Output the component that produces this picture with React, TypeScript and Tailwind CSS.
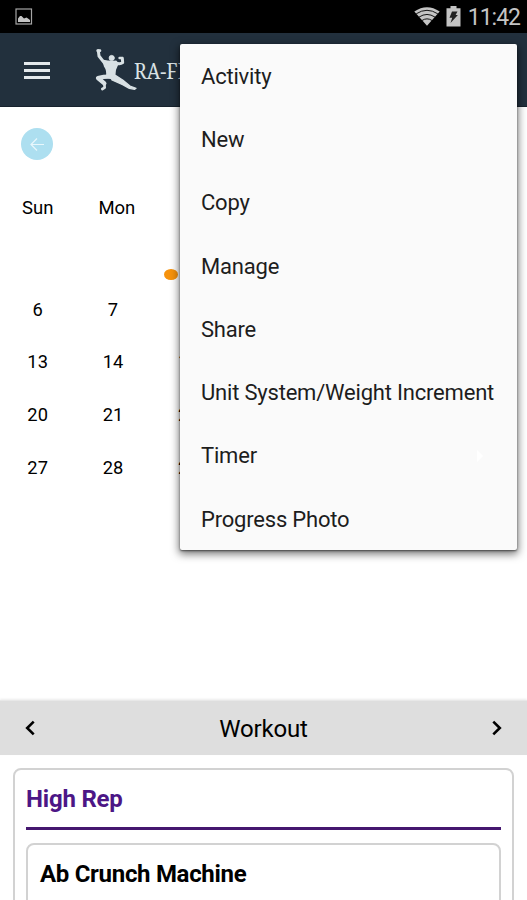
import { useState } from "react";

const menuItems = [
  { label: "Activity" },
  { label: "New" },
  { label: "Copy" },
  { label: "Manage" },
  { label: "Share" },
  { label: "Unit System/Weight Increment" },
  { label: "Timer", submenu: true },
  { label: "Progress Photo" },
];

const weekdays = ["Sun", "Mon", "Tue", "Wed", "Thu", "Fri", "Sat"];

const weeks = [
  ["", "", "1", "2", "3", "4", "5"],
  ["6", "7", "8", "9", "10", "11", "12"],
  ["13", "14", "15", "16", "17", "18", "19"],
  ["20", "21", "22", "23", "24", "25", "26"],
  ["27", "28", "29", "30", "", "", ""],
];

function StatusBar() {
  return (
    <div className="flex h-[33px] items-center bg-black pl-[15px] pr-[7px] text-[#c4c4c4]">
      <svg width="18" height="18" viewBox="0 0 18 18">
        <rect x="1" y="1" width="15.5" height="15" fill="none" stroke="#a5a5a5" strokeWidth="1.2" />
        <path d="M3 14v-3.5l2-2.5h1.5L9 10.5l2.5-1 1.5 1L15 12v2z" fill="#c4c4c4" />
      </svg>
      <svg className="ml-auto" width="26" height="19" viewBox="0 0 26 19">
        <path d="M13 18.8 0.3 4.6Q13-4 25.7 4.6z" fill="#c4c4c4" />
        <path d="M2.2 6.8Q13-.2 23.8 6.8M5 10.1Q13 4.8 21 10.1M8 13.5Q13 10.2 18 13.5" fill="none" stroke="#000" strokeWidth="0.9" />
      </svg>
      <svg className="ml-[6px]" width="15" height="21" viewBox="0 0 15 21">
        <path d="M4.5 0h6v2.2H14.5V20.5H.5V2.2h4z" fill="#c4c4c4" />
        <path d="M6 5.5h5.5L9.6 9h2.3L4.5 17l1.7-5.3H3.5z" fill="#222" />
      </svg>
      <span className="ml-[7px] mt-[2px] text-[23px] leading-[33px] tracking-[-1px]">11:42</span>
    </div>
  );
}

function Logo() {
  return (
    <svg width="43" height="42" viewBox="15 15 129 126" fill="#d9e1e4" stroke="#d9e1e4" strokeLinecap="round" strokeLinejoin="round">
      <circle cx="65" cy="42" r="8" strokeWidth="2" />
      <path d="M40 50Q60 54 78 52L82 62Q74 76 74 92L66 104 50 98Q54 80 44 66Z" strokeWidth="5" />
      <path d="M25 20 27 36 44 58" fill="none" strokeWidth="9" />
      <path d="M23 20h7M89 42l6 0" fill="none" strokeWidth="8" />
      <path d="M78 57Q90 62 98 56L97 43" fill="none" strokeWidth="9" />
      <path d="M58 98Q40 98 24 102L43 118" fill="none" strokeWidth="13" />
      <path d="M43 118 44 131 37 135" fill="none" strokeWidth="8" />
      <path d="M62 92 76 94 98 108 120 126 138 133 134 136 118 133 98 122 66 108Z" strokeWidth="4" />
    </svg>
  );
}

function Header({ onToggle }: { onToggle: () => void }) {
  return (
    <header className="flex h-[74px] items-center border-b border-[#17222d] bg-[#22303d] pl-6">
      <button className="mt-px flex w-[26px] flex-col gap-[4px]" aria-label="Navigation" onClick={onToggle}>
        <span className="h-[3px] w-full bg-[#e4e9ec]" />
        <span className="h-[3px] w-full bg-[#e4e9ec]" />
        <span className="h-[3px] w-full bg-[#e4e9ec]" />
      </button>
      <div className="ml-[45px] mt-px">
        <Logo />
      </div>
      <span className="-ml-[4px] mt-[2px] origin-left scale-x-[0.88] font-['Noto_Serif','Liberation_Serif',serif] text-[22px] text-[#d9e1e4]">RA-FIT</span>
    </header>
  );
}

function Calendar() {
  return (
    <section className="flex h-[593px] flex-col">
      <div className="px-[21px] pt-[21px]">
        <button className="flex size-8 items-center justify-center rounded-full bg-[#addff0]" aria-label="Previous month">
          <svg width="14" height="13" viewBox="0 0 14 13" fill="none" stroke="#e8f7fc" strokeWidth="1.2">
            <path d="M7 .5 1 6.5l6 6M1 6.5h13" />
          </svg>
        </button>
      </div>
      <div className="mt-[33.5px] flex gap-[45px] overflow-hidden pl-[22px] text-[18.5px] leading-[28px]">
        {weekdays.map((day) => (
          <span key={day}>{day}</span>
        ))}
      </div>
      <div className="mt-[9px] text-[18.3px]">
        {weeks.map((week, row) => (
          <div key={row} className="grid h-[52.7px] grid-cols-7">
            {week.map((day, col) => (
              <div key={col} className="flex flex-col items-center justify-center">
                <span className="leading-[24px]">{day}</span>
                {day === "1" && <span className="-mb-[12px] mr-[34px] h-[11px] w-[14px] rounded-[50%] bg-[#f6920c]" />}
              </div>
            ))}
          </div>
        ))}
      </div>
    </section>
  );
}

function Chevron({ flip = false }: { flip?: boolean }) {
  return (
    <svg className={flip ? "rotate-180" : ""} width="10" height="16" viewBox="0 0 10 16" fill="none" stroke="#000" strokeWidth="2.6">
      <path d="M8.7 1.6 2.2 8l6.5 6.4" />
    </svg>
  );
}

function Workout() {
  return (
    <section>
      <div className="flex h-[55px] items-center justify-between border-t border-[#e8e8e8] bg-[#dedede] px-[25px] shadow-[0_-1px_2px_rgba(0,0,0,0.08)]">
        <Chevron />
        <h2 className="pt-[2px] text-[24px] tracking-[-0.2px]">Workout</h2>
        <Chevron flip />
      </div>
      <div className="mx-[13px] mt-[13px] h-[160px] rounded-lg border-2 border-[#d2d2d2] px-[11px]">
        <h3 className="h-[60px] border-b-3 border-[#45176f] pt-[15px] text-[24px] font-bold leading-[28px] tracking-[-0.2px] text-[#4c1686]">High Rep</h3>
        <div className="mt-[13px] h-[100px] rounded-lg border-2 border-[#d2d2d2] px-[12px] pt-[14px]">
          <h4 className="text-[24px] font-bold leading-[30px] tracking-[-0.3px]">Ab Crunch Machine</h4>
        </div>
      </div>
    </section>
  );
}

function OptionsMenu() {
  return (
    <ul className="absolute left-[180px] top-[44px] z-10 w-[337px] rounded-[2px] bg-[#fafafa] shadow-[0_3px_8px_1px_rgba(0,0,0,0.55),0_1px_2px_rgba(0,0,0,0.5)]">
      {menuItems.map((item) => (
        <li key={item.label} className="flex h-[63.25px] items-center justify-between pl-[21px] pr-[34px] pt-[1.5px] text-[22px] tracking-[-0.2px] text-[#1d1d1d]">
          <span className="whitespace-nowrap">{item.label}</span>
          {item.submenu && (
            <svg width="6" height="12" viewBox="0 0 6 12">
              <path d="M0 0l6 6-6 6z" fill="#fff" />
            </svg>
          )}
        </li>
      ))}
    </ul>
  );
}

export default function App() {
  const [open, setOpen] = useState(true);

  return (
    <div className="relative h-[900px] w-[527px] overflow-hidden bg-white font-[Roboto,sans-serif] text-black">
      <StatusBar />
      <Header onToggle={() => setOpen(!open)} />
      <Calendar />
      <Workout />
      {open && <OptionsMenu />}
    </div>
  );
}
